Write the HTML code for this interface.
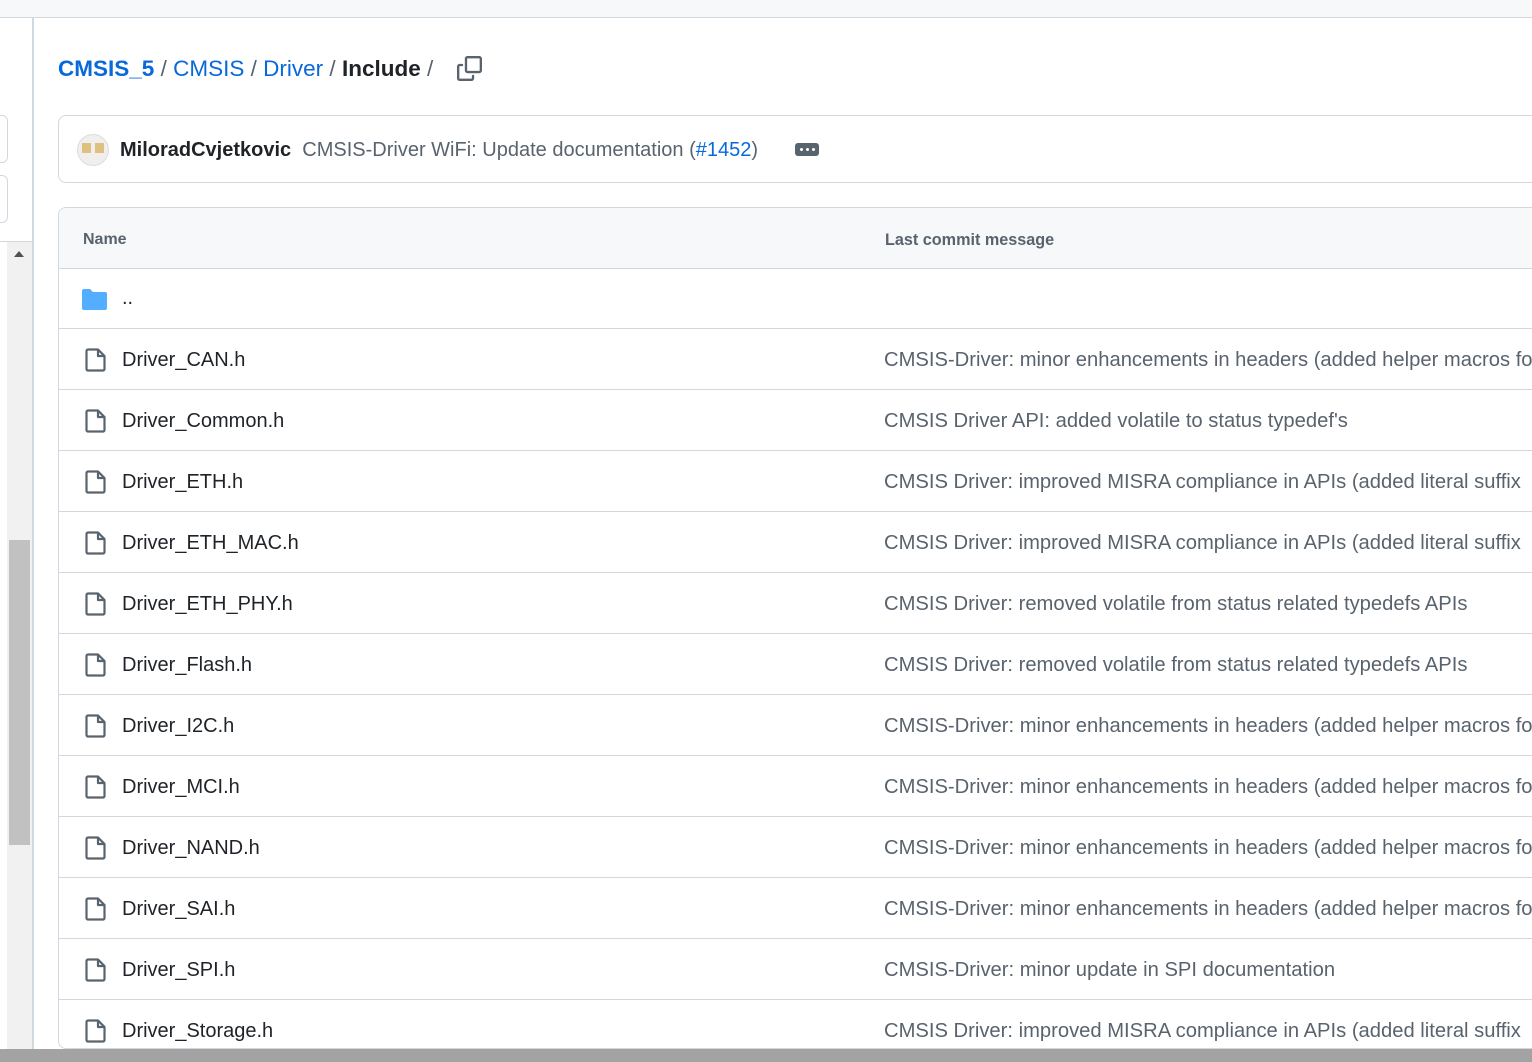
<!DOCTYPE html>
<html><head><meta charset="utf-8"><style>
*{margin:0;padding:0;box-sizing:border-box}
body{width:1532px;height:1062px;overflow:hidden;background:#fff;font-family:"Liberation Sans",sans-serif;position:relative;color:#1f2328}
.abs{position:absolute}
.row{position:absolute;left:58px;right:0;height:61px;border-top:1px solid #d1d9e0}
.row .ic{position:absolute;left:27px;top:19px}
.row .nm{position:absolute;left:64px;top:20px;font-size:20px;color:#1f2328;white-space:nowrap}
.row .msg{position:absolute;left:826px;top:20px;font-size:20.2px;color:#59636e;white-space:nowrap}
</style></head><body>
<div class="abs" style="left:0;top:0;width:1532px;height:18px;background:#f6f8fa;border-bottom:1px solid #d1d9e0"></div>
<div class="abs" style="left:32px;top:18px;width:2px;height:1031px;background:#d1d9e0"></div>
<div class="abs" style="left:-10px;top:115px;width:18px;height:48px;border:1px solid #d1d9e0;border-radius:6px"></div>
<div class="abs" style="left:-10px;top:175px;width:18px;height:48px;border:1px solid #d1d9e0;border-radius:6px"></div>
<div class="abs" style="left:0;top:241px;width:32px;height:1px;background:#d1d9e0"></div>
<div class="abs" style="left:7px;top:242px;width:25px;height:807px;background:#f1f1f1"></div>
<div class="abs" style="left:14px;top:251px;width:0;height:0;border-left:5px solid transparent;border-right:5px solid transparent;border-bottom:6px solid #505050"></div>
<div class="abs" style="left:9px;top:540px;width:21px;height:305px;background:#c1c1c1"></div>

<div class="abs" style="left:58px;top:56px;font-size:22.5px;white-space:nowrap">
<span style="color:#0969da;font-weight:bold">CMSIS_5</span> <span style="color:#59636e">/</span> <span style="color:#0969da">CMSIS</span> <span style="color:#59636e">/</span> <span style="color:#0969da">Driver</span> <span style="color:#59636e">/</span> <span style="font-weight:bold">Include</span> <span style="color:#59636e">/</span></div>
<svg class="abs" style="left:457px;top:56px" width="25" height="25" viewBox="0 0 16 16" fill="#59636e"><path d="M0 6.75C0 5.780.78 5 1.75 5h1.5a.75.75 0 0 1 0 1.5h-1.5a.25.25 0 0 0-.25.25v7.5c0 .14.11.25.25.25h7.5a.25.25 0 0 0 .25-.25v-1.5a.75.75 0 0 1 1.5 0v1.5A1.75 1.75 0 0 1 9.250 16h-7.5A1.75 1.75 0 0 1 0 14.25Z"/><path d="M5 1.75C5 .78 5.78 0 6.75 0h7.5C15.22 0 16 .78 16 1.75v7.5A1.75 1.75 0 0 1 14.25 11h-7.5A1.75 1.75 0 0 1 5 9.25Zm1.75-.25a.25.25 0 0 0-.25.25v7.5c0 .14.11.25.25.25h7.5a.25.25 0 0 0 .25-.25v-7.5a.25.25 0 0 0-.25-.25Z"/></svg>

<div class="abs" style="left:58px;top:115px;width:1500px;height:68px;border:1px solid #d1d9e0;border-radius:8px"></div>
<div class="abs" style="left:77px;top:134px;width:32px;height:32px;border-radius:50%;background:#f0efed;border:1px solid #ddd"></div>
<div class="abs" style="left:82px;top:143px;width:9px;height:10px;background:#e0c080"></div>
<div class="abs" style="left:95px;top:143px;width:9px;height:10px;background:#e0c080"></div>
<div class="abs" style="left:120px;top:139px;font-size:20px;white-space:nowrap"><b style="color:#1f2328">MiloradCvjetkovic</b>&nbsp; <span style="color:#59636e">CMSIS-Driver WiFi: Update documentation (<span style="color:#0969da">#1452</span>)</span></div>
<div class="abs" style="left:795px;top:143px;width:24px;height:13px;background:#59636e;border-radius:3px"></div>
<div class="abs" style="left:800px;top:148px;width:3px;height:3px;background:#fff;border-radius:50%;box-shadow:6px 0 #fff,12px 0 #fff"></div>

<div class="abs" style="left:58px;top:207px;width:1500px;height:842px;border:1px solid #d1d9e0;border-radius:8px;overflow:hidden">
<div style="height:61px;background:#f6f8fa"></div>
</div>
<div class="abs" style="left:83px;top:231px;font-size:16px;font-weight:bold;color:#59636e">Name</div>
<div class="abs" style="left:885px;top:231px;font-size:16.2px;font-weight:bold;color:#59636e">Last commit message</div>

<div class="row" style="top:268px">
<svg class="ic" style="left:24px;top:20px" width="25" height="21" viewBox="0 0 25 21"><path d="M0 2a2 2 0 0 1 2-2h6l3 3h12a2 2 0 0 1 2 2v14a2 2 0 0 1-2 2H2a2 2 0 0 1-2-2Z" fill="#54aeff"/></svg>
<div class="nm" style="top:18px">..</div></div>

<div id="rows"></div>
<script>
var d=[["Driver_CAN.h","CMSIS-Driver: minor enhancements in headers (added helper macros for"],
["Driver_Common.h","CMSIS Driver API: added volatile to status typedef's"],
["Driver_ETH.h","CMSIS Driver: improved MISRA compliance in APIs (added literal suffix"],
["Driver_ETH_MAC.h","CMSIS Driver: improved MISRA compliance in APIs (added literal suffix"],
["Driver_ETH_PHY.h","CMSIS Driver: removed volatile from status related typedefs APIs"],
["Driver_Flash.h","CMSIS Driver: removed volatile from status related typedefs APIs"],
["Driver_I2C.h","CMSIS-Driver: minor enhancements in headers (added helper macros for"],
["Driver_MCI.h","CMSIS-Driver: minor enhancements in headers (added helper macros for"],
["Driver_NAND.h","CMSIS-Driver: minor enhancements in headers (added helper macros for"],
["Driver_SAI.h","CMSIS-Driver: minor enhancements in headers (added helper macros for"],
["Driver_SPI.h","CMSIS-Driver: minor update in SPI documentation"],
["Driver_Storage.h","CMSIS Driver: improved MISRA compliance in APIs (added literal suffix"]];
var h="";
for(var i=0;i<d.length;i++){var t=328+i*61;
h+='<div class="row" style="top:'+t+'px"><svg class="ic" width="22" height="24" viewBox="0 0 22 24"><path d="M3 1.5h10l6.5 6.5v13a1.5 1.5 0 0 1-1.5 1.5H3A1.5 1.5 0 0 1 1.5 21V3A1.5 1.5 0 0 1 3 1.5Z M13 1.5V8h6.5" fill="none" stroke="#59636e" stroke-width="2.2" stroke-linejoin="round"/></svg><div class="nm">'+d[i][0]+'</div><div class="msg">'+d[i][1]+'</div></div>';}
document.getElementById("rows").innerHTML=h;
</script>
<div class="abs" style="left:0;top:1049px;width:1532px;height:13px;background:#a3a3a3"></div>
</body></html>
